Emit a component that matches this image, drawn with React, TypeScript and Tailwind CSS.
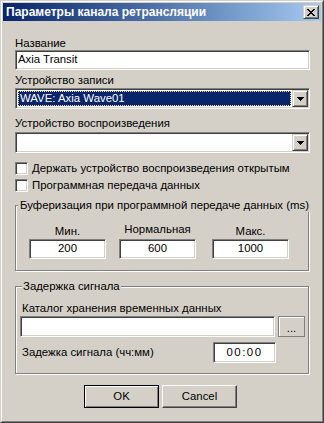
import React from "react";

// Classic Win9x/2000 dialog: "Параметры канала ретрансляции"

const sunken =
  "border border-t-[#808080] border-l-[#808080] border-r-white border-b-white shadow-[inset_1px_1px_0_#404040,inset_-1px_-1px_0_#D4D0C8] bg-white p-px";

const raised =
  "border border-t-[#D4D0C8] border-l-[#D4D0C8] border-r-[#404040] border-b-[#404040] shadow-[inset_1px_1px_0_#fff,inset_-1px_-1px_0_#808080] bg-[#D4D0C8]";

function CloseGlyph() {
  // 8x7 bitmap "X"
  const rows = [
    [0, 1, 6, 7],
    [1, 2, 5, 6],
    [2, 3, 4, 5],
    [3, 4],
    [2, 3, 4, 5],
    [1, 2, 5, 6],
    [0, 1, 6, 7],
  ];
  return (
    <svg width="8" height="7" viewBox="0 0 8 7" shapeRendering="crispEdges">
      {rows.map((xs, y) =>
        xs.map((x) => <rect key={`${y}-${x}`} x={x} y={y} width="1" height="1" fill="#000" />)
      )}
    </svg>
  );
}

function ArrowGlyph() {
  return (
    <svg width="7" height="4" viewBox="0 0 7 4" shapeRendering="crispEdges">
      <rect x="0" y="0" width="7" height="1" fill="#000" />
      <rect x="1" y="1" width="5" height="1" fill="#000" />
      <rect x="2" y="2" width="3" height="1" fill="#000" />
      <rect x="3" y="3" width="1" height="1" fill="#000" />
    </svg>
  );
}

function TitleBar() {
  return (
    <div className="h-[18px] flex items-center justify-between bg-linear-to-r from-[#0A246A] to-[#A6CAF0] pl-[3px] pr-[2px]">
      <span className="text-white font-bold text-[12px] leading-[13px] pt-px">Параметры канала ретрансляции</span>
      <div className={`${raised} w-[16px] h-[14px] flex items-center justify-center`}>
        <CloseGlyph />
      </div>
    </div>
  );
}

function Combo({ value, selected }: { value?: string; selected?: boolean }) {
  return (
    <div className={`${sunken} w-[295px] h-[21px] flex`}>
      <div className="flex-1 p-px">
        {selected && (
          <div className="h-full bg-[#0A246A] text-white border border-dotted border-[#F5DB95] pl-px leading-[13px] whitespace-nowrap">
            {value}
          </div>
        )}
      </div>
      <div className={`${raised} w-[16px] h-full flex items-center justify-center`}>
        <ArrowGlyph />
      </div>
    </div>
  );
}

function Check({ label }: { label: string }) {
  return (
    <div className="flex items-center h-[13px]">
      <div className="w-[13px] h-[13px] shrink-0 border border-t-[#808080] border-l-[#808080] border-r-white border-b-white shadow-[inset_1px_1px_0_#404040,inset_-1px_-1px_0_#D4D0C8] bg-white" />
      <span className="ml-[4px] whitespace-nowrap">{label}</span>
    </div>
  );
}

function NumBox({ value }: { value: string }) {
  return (
    <div className={`${sunken} w-[77px] h-[20px] text-center leading-[15px]`}>{value}</div>
  );
}

export default function App() {
  return (
    <div className="w-[324px] h-[423px] bg-[#D4D0C8] border border-t-[#D4D0C8] border-l-[#D4D0C8] border-r-[#404040] border-b-[#404040] font-['Liberation_Sans',Arial,sans-serif] text-[11.4px] leading-[13px] text-black select-none">
      <div className="h-full border border-t-white border-l-white border-r-[#808080] border-b-[#808080] p-px flex flex-col">
        <TitleBar />
        <div className="flex flex-col pl-[12px]">
          <div className="mt-[16px]">Название</div>
          <div className={`${sunken} w-[295px] h-[20px] pl-[2px] leading-[15px]`}>Axia Transit</div>

          <div className="mt-[4px]">Устройство записи</div>
          <div className="mt-px">
            <Combo value="WAVE: Axia Wave01" selected />
          </div>

          <div className="mt-[8px]">Устройство воспроизведения</div>
          <div className="mt-[2px]">
            <Combo />
          </div>

          <div className="mt-[9px]">
            <Check label="Держать устройство воспроизведения открытым" />
          </div>
          <div className="mt-[4px]">
            <Check label="Программная передача данных" />
          </div>

          <div className="relative mt-[13px] w-[294px] h-[66px] border border-[#808080] shadow-[inset_1px_1px_0_#fff,1px_1px_0_#fff]">
            <span className="absolute left-[2px] top-[-7px] px-[2px] bg-[#D4D0C8] whitespace-nowrap">
              Буферизация при программной передаче данных (ms)
            </span>
            <div className="flex pt-[19px] pl-[13px]">
              <div className="flex flex-col items-center w-[77px]">
                <div>Мин.</div>
                <div className="mt-px">
                  <NumBox value="200" />
                </div>
              </div>
              <div className="flex flex-col items-center w-[77px] ml-[13px]">
                <div className="-mt-[2px] mb-[2px]">Нормальная</div>
                <div className="mt-px">
                  <NumBox value="600" />
                </div>
              </div>
              <div className="flex flex-col items-center w-[77px] ml-[16px]">
                <div>Макс.</div>
                <div className="mt-px">
                  <NumBox value="1000" />
                </div>
              </div>
            </div>
          </div>

          <div className="relative mt-[15px] w-[294px] h-[88px] border border-[#808080] shadow-[inset_1px_1px_0_#fff,1px_1px_0_#fff] pl-[4px] pt-[15px] flex flex-col">
            <span className="absolute left-[6px] top-[-7px] px-px bg-[#D4D0C8] whitespace-nowrap">Задержка сигнала</span>
            <div className="ml-[2px]">Каталог хранения временных данных</div>
            <div className="flex mt-px">
              <div className={`${sunken} w-[255px] h-[21px]`} />
              <div className="ml-[3px] w-[27px] h-[21px] border border-[#808080] shadow-[inset_1px_1px_0_#fff] flex items-end justify-center pb-[3px] leading-[10px]">
                ...
              </div>
            </div>
            <div className="flex items-center mt-[5px] h-[21px]">
              <div className="ml-[2px] whitespace-nowrap">Задежка сигнала (чч:мм)</div>
              <div className={`${sunken} ml-auto mr-[32px] w-[63px] h-[21px] text-center leading-[16px] tracking-[1.5px]`}>
                00:00
              </div>
            </div>
          </div>

          <div className="flex mt-[11px] ml-[69px]">
            <div className="w-[75px] h-[23px] border border-black shadow-[inset_1px_1px_0_#fff,inset_-1px_-1px_0_#808080] flex items-center justify-center">
              OK
            </div>
            <div className="ml-[3px] w-[75px] h-[23px] border border-t-white border-l-white border-r-[#404040] border-b-[#404040] shadow-[inset_-1px_-1px_0_#808080] flex items-center justify-center">
              Cancel
            </div>
          </div>
        </div>
      </div>
    </div>
  );
}
